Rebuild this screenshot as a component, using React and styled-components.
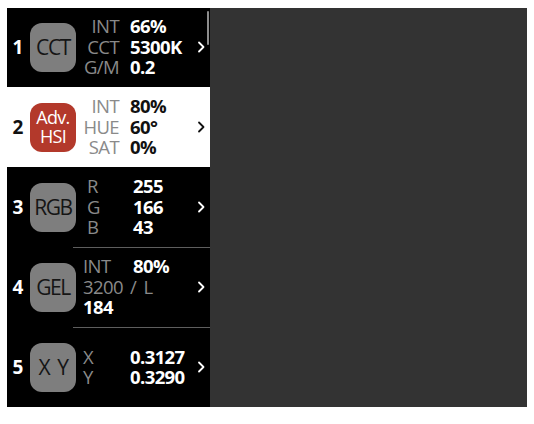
import styled, { createGlobalStyle } from "styled-components";

const GlobalStyle = createGlobalStyle`
  body {
    margin: 8px 7px;
    background: #ffffff;
    font-family: "Open Sans", "Noto Sans", sans-serif;
  }
`;

const modes = [
  {
    num: 1,
    icon: "CCT",
    layout: "right",
    rows: [
      ["INT", "66%"],
      ["CCT", "5300K"],
      ["G/M", "0.2"],
    ],
  },
  {
    num: 2,
    icon: "Adv.\nHSI",
    active: true,
    layout: "right",
    rows: [
      ["INT", "80%"],
      ["HUE", "60°"],
      ["SAT", "0%"],
    ],
  },
  {
    num: 3,
    icon: "RGB",
    layout: "rgb",
    rows: [
      ["R", "255"],
      ["G", "166"],
      ["B", "43"],
    ],
  },
  {
    num: 4,
    icon: "GEL",
    layout: "gel",
    divider: true,
    rows: [["INT", "80%"], ["3200 / L"], [null, "184"]],
  },
  {
    num: 5,
    icon: "X Y",
    layout: "xy",
    divider: true,
    rows: [
      ["X", "0.3127"],
      ["Y", "0.3290"],
    ],
  },
];

const columns = {
  right: "36px auto",
  rgb: "46px auto",
  gel: "50px auto",
  xy: "47px auto",
};

export default function App() {
  return (
    <>
      <GlobalStyle />
      <Screen>
        <Sidebar>
          <List>
            {modes.map((m) => (
              <Row key={m.num} $active={m.active} $divider={m.divider}>
                <Num>{m.num}</Num>
                <Icon $red={m.active}>
                  {m.icon.split("\n").map((t) => (
                    <span key={t}>{t}</span>
                  ))}
                </Icon>
                <Details $cols={columns[m.layout]} $pad={m.layout === "rgb" ? 4 : 0}>
                  {m.rows.map((r, i) =>
                    r.length === 1 ? (
                      <Label key={i} $span>
                        {r[0]}
                      </Label>
                    ) : r[0] === null ? (
                      <Value key={i} $span>
                        {r[1]}
                      </Value>
                    ) : (
                      [
                        <Label key={i + "l"} $right={m.layout === "right"}>
                          {r[0]}
                        </Label>,
                        <Value key={i + "v"} $active={m.active}>
                          {r[1]}
                        </Value>,
                      ]
                    )
                  )}
                </Details>
                <Chevron viewBox="0 0 8 12" $active={m.active}>
                  <path d="M2 1.5 L6.5 6 L2 10.5" />
                </Chevron>
              </Row>
            ))}
          </List>
          <ScrollThumb />
        </Sidebar>
        <Preview />
      </Screen>
    </>
  );
}

const Screen = styled.div`
  display: flex;
  width: 520px;
  height: 399px;
`;

const Sidebar = styled.div`
  position: relative;
  width: 203px;
  background: #000;
  overflow: hidden;
`;

const List = styled.div`
  display: flex;
  flex-direction: column;
  margin-top: -1px;
`;

const Row = styled.div`
  position: relative;
  display: flex;
  align-items: center;
  height: 80px;
  flex-shrink: 0;
  background: ${(p) => (p.$active ? "#ffffff" : "#000000")};
  color: ${(p) => (p.$active ? "#111" : "#fff")};

  ${(p) =>
    p.$divider &&
    `
    &::before {
      content: "";
      position: absolute;
      top: 0;
      left: 66px;
      right: 0;
      height: 1px;
      background: #5e5e5e;
    }
  `}
`;

const Num = styled.div`
  width: 22px;
  text-align: center;
  font-size: 19px;
  font-weight: 700;
`;

const Icon = styled.div`
  width: 46px;
  height: 49px;
  margin-left: 1px;
  border-radius: 12px;
  background: ${(p) => (p.$red ? "#b3392b" : "#7e7e7e")};
  color: ${(p) => (p.$red ? "#fff" : "#151515")};
  display: flex;
  flex-direction: column;
  align-items: center;
  justify-content: center;
  font-size: ${(p) => (p.$red ? "18px" : "21px")};
  line-height: ${(p) => (p.$red ? "19px" : "24px")};
  font-weight: 500;
  letter-spacing: ${(p) => (p.$red ? "-0.7px" : "-1.4px")};
  word-spacing: 4px;
  white-space: pre;
`;

const Details = styled.div`
  flex: 1;
  display: grid;
  grid-template-columns: ${(p) => p.$cols};
  column-gap: ${(p) => (p.$cols === "36px auto" ? "11px" : "0")};
  padding-left: ${(p) => 7 + p.$pad}px;
  font-size: 18.5px;
  line-height: 20.5px;
  letter-spacing: -0.6px;
  word-spacing: 3px;
`;

const Label = styled.div`
  color: #8a8a8a;
  font-weight: 500;
  text-align: ${(p) => (p.$right ? "right" : "left")};
  white-space: nowrap;
  ${(p) => p.$span && "grid-column: 1 / span 2;"}
`;

const Value = styled.div`
  color: ${(p) => (p.$active ? "#111" : "#fff")};
  font-weight: 700;
  white-space: nowrap;
  ${(p) => p.$span && "grid-column: 1 / span 2;"}
`;

const Chevron = styled.svg`
  width: 8px;
  height: 12px;
  margin-right: 5px;
  fill: none;
  stroke: ${(p) => (p.$active ? "#111" : "#fff")};
  stroke-width: 1.8;
  stroke-linecap: round;
  stroke-linejoin: round;
`;

const ScrollThumb = styled.div`
  position: absolute;
  top: 3px;
  right: 1px;
  width: 2px;
  height: 34px;
  border-radius: 1px;
  background: #8c8c8c;
`;

const Preview = styled.div`
  flex: 1;
  background: #333333;
`;
